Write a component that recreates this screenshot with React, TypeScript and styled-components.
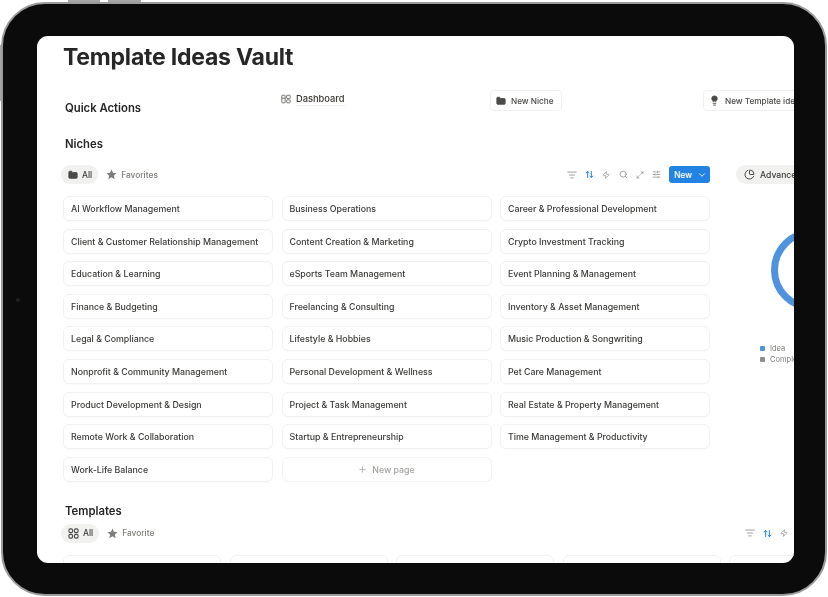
import React from "react";
import styled, { createGlobalStyle } from "styled-components";
import {
  ArrowUpDown,
  ChartPie,
  ChevronDown,
  Folder,
  Lightbulb,
  ListFilter,
  Maximize2,
  Plus,
  Search,
  SlidersHorizontal,
  Zap,
} from "lucide-react";

const Global = createGlobalStyle`
  html, body { margin: 0; padding: 0; background: #fff; }
  body { font-family: Inter, "Liberation Sans", sans-serif; color: #37352f; }
`;

const Stage = styled.div`
  width: 828px;
  height: 597px;
  padding: 2px 1px 1px 1px;
  box-sizing: border-box;
  position: relative;
  overflow: hidden;
`;

const HardwareKey = styled.div<{ $side: "top" | "left"; $at: number; $len: number }>`
  position: absolute;
  background: #a6a6a6;
  ${(p) =>
    p.$side === "top"
      ? `top: 0; left: ${p.$at}px; width: ${p.$len}px; height: 4px;`
      : `left: 0; top: ${p.$at}px; height: ${p.$len}px; width: 4px;`}
`;

const Device = styled.div`
  position: relative;
  height: 100%;
  box-sizing: border-box;
  background: #0b0b0b;
  border: 2px solid #9b9b9b;
  border-radius: 44px;
  padding: 32px 31px 31px 34px;
  display: flex;
`;

const Camera = styled.div`
  position: absolute;
  left: 13px;
  top: 294px;
  width: 4px;
  height: 4px;
  border-radius: 50%;
  background: #222;
`;

const Screen = styled.main`
  flex: 1;
  background: #fff;
  border-radius: 11px;
  overflow: hidden;
  padding: 0 0 0 26px;
  filter: blur(0.3px);
`;

const Title = styled.h1`
  margin: 5px 0 0 0;
  font-size: 23px;
  line-height: 32px;
  font-weight: 700;
  letter-spacing: -0.22px;
  color: #262626;
`;

const QuickRow = styled.section`
  display: grid;
  grid-template-columns: 218px 209px 213px 200px;
  margin-top: 17px;
  height: 34px;
  white-space: nowrap;
`;

const Heading = styled.h2`
  margin: 0 0 0 2px;
  font-size: 11.3px;
  line-height: 18px;
  font-weight: 600;
  color: #262626;
`;

const QuickHeading = styled(Heading)`
  margin-top: 9px;
`;

const DashLink = styled.div`
  display: flex;
  align-items: center;
  gap: 5px;
  height: 16px;
  font-size: 9.3px;
  font-weight: 500;
  color: #37352f;
  margin-top: 1px;
`;

const DashText = styled.span`
  border-bottom: 1px solid #eeeeec;
  line-height: 13px;
`;

const ActionButton = styled.div`
  display: inline-flex;
  align-items: center;
  gap: 5px;
  justify-self: start;
  height: 19px;
  padding: 0 7px 0 5px;
  border: 1px solid #f0f0ee;
  border-radius: 4px;
  font-size: 8.2px;
  font-weight: 500;
  color: #4a4a48;
  background: #fff;
`;

const SectionHeading = styled(Heading)`
  margin-top: 11px;
`;

const Columns = styled.div`
  display: flex;
  align-items: flex-start;
  gap: 26px;
  width: 900px;
  margin-top: 12px;
`;

const NichesColumn = styled.section`
  width: 647px;
  flex-shrink: 0;
`;

const Toolbar = styled.div`
  display: flex;
  align-items: center;
  height: 19px;
`;

const TabPill = styled.div<{ $active?: boolean }>`
  display: flex;
  align-items: center;
  gap: 4px;
  height: 19px;
  padding: 0 6px 0 7px;
  border-radius: 10px;
  font-size: 8.4px;
  font-weight: 500;
  color: ${(p) => (p.$active ? "#3a3a38" : "#7d7d7a")};
  background: ${(p) => (p.$active ? "#f1f1ef" : "transparent")};
  margin-left: ${(p) => (p.$active ? "-2px" : "1px")};
`;

const ToolIcons = styled.div`
  display: flex;
  align-items: center;
  gap: 8.2px;
  margin: 0 1px 0 auto;
  color: #8c8c89;
`;

const NewButton = styled.div`
  display: flex;
  align-items: center;
  justify-content: space-between;
  width: 41px;
  height: 17px;
  box-sizing: border-box;
  padding: 0 3px 0 5px;
  margin-left: 7px;
  border-radius: 3px;
  background: #2383e2;
  color: #fff;
  font-size: 8.4px;
  font-weight: 500;
`;

const CardGrid = styled.div`
  display: grid;
  grid-template-columns: repeat(3, 210px);
  grid-auto-rows: 25px;
  column-gap: 8.5px;
  row-gap: 7.6px;
  margin-top: 12px;
`;

const Card = styled.div`
  display: flex;
  align-items: center;
  box-sizing: border-box;
  padding: 0 7px;
  border: 1px solid #f1f1ef;
  border-radius: 6px;
  box-shadow: 0 1px 1px rgba(0, 0, 0, 0.02);
  font-size: 8.8px;
  font-weight: 500;
  white-space: nowrap;
  color: #3a3a38;
`;

const AddCard = styled(Card)`
  justify-content: center;
  gap: 5px;
  color: #a3a3a0;
  box-shadow: none;
`;

const SideColumn = styled.aside`
  flex-shrink: 0;
  width: 227px;
`;

const AdvancedPill = styled.div`
  display: flex;
  width: fit-content;
  align-items: center;
  gap: 5px;
  height: 19px;
  padding: 0 10px 0 8px;
  border-radius: 10px;
  background: #f1f1ef;
  font-size: 8.6px;
  font-weight: 500;
  color: #3a3a38;
`;

const Donut = styled.svg`
  display: block;
  margin: 45px 0 0 35px;
`;

const Legend = styled.div`
  display: grid;
  row-gap: 3px;
  margin: 33px 0 0 24px;
`;

const LegendRow = styled.div`
  display: flex;
  align-items: center;
  gap: 5px;
  height: 8px;
  font-size: 7.5px;
  white-space: nowrap;
  color: #7d7d7a;
`;

const Swatch = styled.span<{ $color: string }>`
  width: 5px;
  height: 5px;
  border-radius: 1px;
  background: ${(p) => p.$color};
`;

const TemplatesHeading = styled(Heading)`
  margin-top: 20px;
`;

const TemplatesBar = styled(Toolbar)`
  width: 900px;
  margin-top: 4px;
`;

const TemplateIcons = styled(ToolIcons)`
  position: absolute;
  left: 682px;
  margin: 0;
  gap: 8.2px;
`;

const TemplatesToolbarWrap = styled.div`
  position: relative;
`;

const TemplateCards = styled.div`
  display: flex;
  gap: 8.5px;
  margin-top: 12px;
`;

const TemplateCard = styled.div`
  width: 158px;
  height: 40px;
  flex-shrink: 0;
  box-sizing: border-box;
  border: 1px solid #f1f1ef;
  border-radius: 6px;
`;

const DashIcon = () => (
  <svg width="10" height="10" viewBox="0 0 12 12" fill="none" stroke="#6e6e6b" strokeWidth="1.1">
    <rect x="1" y="1.5" width="4" height="9" rx="0.6" />
    <rect x="6.8" y="1.5" width="4.2" height="4" rx="0.6" />
    <rect x="6.8" y="7" width="4.2" height="3.5" rx="0.6" />
    <path d="M1 5h4" />
  </svg>
);

const GridIcon = () => (
  <svg width="11" height="11" viewBox="0 0 12 12" fill="none" stroke="#4a4a48" strokeWidth="1.2">
    <rect x="1" y="1" width="4" height="4" rx="1.5" />
    <rect x="7" y="1" width="4" height="4" rx="1.5" />
    <rect x="1" y="7" width="4" height="4" rx="1.5" />
    <rect x="7" y="7" width="4" height="4" rx="1.5" />
  </svg>
);

const FilledFolder = ({ size = 10 }: { size?: number }) => (
  <Folder size={size} fill="#4a4a48" stroke="#4a4a48" strokeWidth={2} />
);

const FilledStar = () => (
  <svg width="11" height="11" viewBox="0 0 12 12" fill="#7d7d7a">
    <path d="M6 .6l1.6 3.6 3.9.4-2.9 2.6.8 3.9L6 9.1l-3.4 2 .8-3.9L.5 4.6l3.9-.4z" />
  </svg>
);

const blue = "#2383e2";

const niches = [
  "AI Workflow Management",
  "Business Operations",
  "Career & Professional Development",
  "Client & Customer Relationship Management",
  "Content Creation & Marketing",
  "Crypto Investment Tracking",
  "Education & Learning",
  "eSports Team Management",
  "Event Planning & Management",
  "Finance & Budgeting",
  "Freelancing & Consulting",
  "Inventory & Asset Management",
  "Legal & Compliance",
  "Lifestyle & Hobbies",
  "Music Production & Songwriting",
  "Nonprofit & Community Management",
  "Personal Development & Wellness",
  "Pet Care Management",
  "Product Development & Design",
  "Project & Task Management",
  "Real Estate & Property Management",
  "Remote Work & Collaboration",
  "Startup & Entrepreneurship",
  "Time Management & Productivity",
  "Work-Life Balance",
];

export default function App() {
  return (
    <>
      <Global />
      <Stage>
        <HardwareKey $side="top" $at={68} $len={32} />
        <HardwareKey $side="top" $at={108} $len={33} />
        <HardwareKey $side="left" $at={45} $len={56} />
        <Device>
          <Camera />
          <Screen>
            <Title>Template Ideas Vault</Title>
            <QuickRow>
              <QuickHeading>Quick Actions</QuickHeading>
              <DashLink>
                <DashIcon />
                <DashText>Dashboard</DashText>
              </DashLink>
              <ActionButton>
                <FilledFolder />
                New Niche
              </ActionButton>
              <ActionButton>
                <Lightbulb size={11} fill="#4a4a48" stroke="#4a4a48" />
                New Template ideas
              </ActionButton>
            </QuickRow>
            <SectionHeading>Niches</SectionHeading>
            <Columns>
              <NichesColumn>
                <Toolbar>
                  <TabPill $active>
                    <FilledFolder />
                    All
                  </TabPill>
                  <TabPill>
                    <FilledStar />
                    Favorites
                  </TabPill>
                  <ToolIcons>
                    <ListFilter size={10} />
                    <ArrowUpDown size={9} color={blue} strokeWidth={2.6} />
                    <Zap size={8} />
                    <Search size={9} />
                    <Maximize2 size={8} />
                    <SlidersHorizontal size={9} />
                  </ToolIcons>
                  <NewButton>
                    New
                    <ChevronDown size={10} />
                  </NewButton>
                </Toolbar>
                <CardGrid>
                  {niches.map((n) => (
                    <Card key={n}>{n}</Card>
                  ))}
                  <AddCard>
                    <Plus size={9} />
                    New page
                  </AddCard>
                </CardGrid>
              </NichesColumn>
              <SideColumn>
                <AdvancedPill>
                  <ChartPie size={11} />
                  Advanced
                </AdvancedPill>
                <Donut width="82" height="82" viewBox="0 0 82 82">
                  <circle cx="41" cy="41" r="37.5" fill="none" stroke="#4f93e0" strokeWidth="7" />
                </Donut>
                <Legend>
                  <LegendRow>
                    <Swatch $color="#4f93e0" />
                    Idea
                  </LegendRow>
                  <LegendRow>
                    <Swatch $color="#8c8c89" />
                    Complete
                  </LegendRow>
                </Legend>
              </SideColumn>
            </Columns>
            <TemplatesHeading>Templates</TemplatesHeading>
            <TemplatesToolbarWrap>
              <TemplatesBar>
                <TabPill $active>
                  <GridIcon />
                  All
                </TabPill>
                <TabPill>
                  <FilledStar />
                  Favorite
                </TabPill>
                <TemplateIcons>
                  <ListFilter size={10} />
                  <ArrowUpDown size={9} color={blue} strokeWidth={2.6} />
                  <Zap size={8} />
                </TemplateIcons>
              </TemplatesBar>
            </TemplatesToolbarWrap>
            <TemplateCards>
              {[0, 1, 2, 3, 4].map((i) => (
                <TemplateCard key={i} />
              ))}
            </TemplateCards>
          </Screen>
        </Device>
      </Stage>
    </>
  );
}
